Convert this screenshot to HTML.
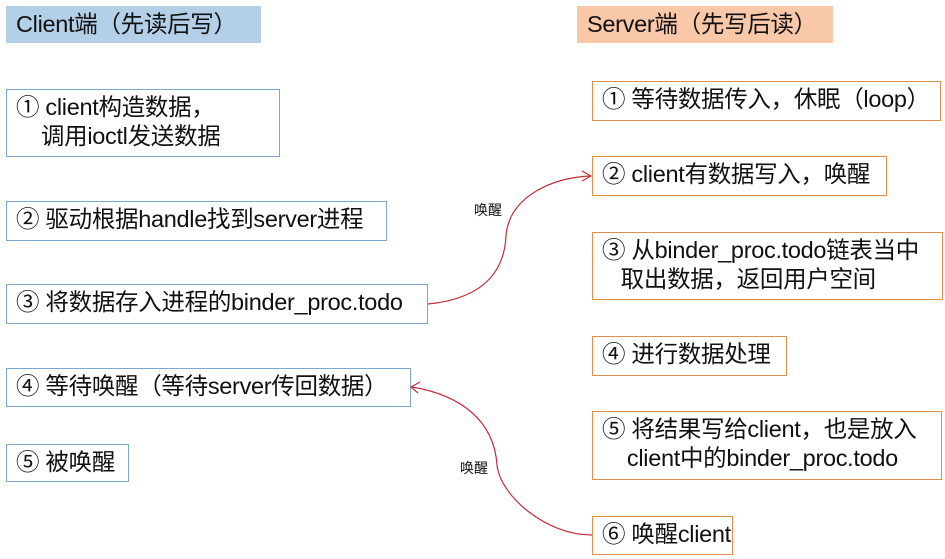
<!DOCTYPE html>
<html><head><meta charset="utf-8"><style>
body{margin:0;width:945px;height:559px;background:#fff;position:relative;overflow:hidden;font-family:"Liberation Sans","Noto Sans CJK SC",sans-serif;color:#111}
.b{position:absolute;box-sizing:border-box;font-size:23.5px;line-height:29px;padding:3px 0 0 9px;white-space:nowrap;letter-spacing:-0.3px}
.l{border:1.5px solid #7fa6cc}
.r{border:1.5px solid #e0904a}
.h{position:absolute;font-size:23.5px;line-height:37px;padding-left:10px;box-sizing:border-box;white-space:nowrap;letter-spacing:-0.3px}
.s{position:absolute;font-size:14px}
</style></head><body>
<div class="h" style="left:6px;top:6px;width:255px;height:37px;background:#b4cfe8">Client端（先读后写）</div>
<div class="h" style="left:577px;top:6px;width:256px;height:37px;background:#f8c8a8">Server端（先写后读）</div>

<div class="b l" style="left:6px;top:89px;width:274px;height:68px">① client构造数据，<br>&nbsp;&nbsp;&nbsp;&nbsp;调用ioctl发送数据</div>
<div class="b l" style="left:6px;top:201px;width:381px;height:40px">② 驱动根据handle找到server进程</div>
<div class="b l" style="left:6px;top:284px;width:422px;height:40px">③ 将数据存入进程的binder_proc.todo</div>
<div class="b l" style="left:6px;top:368px;width:405px;height:39px">④ 等待唤醒（等待server传回数据）</div>
<div class="b l" style="left:6px;top:444px;width:123px;height:38px">⑤ 被唤醒</div>

<div class="b r" style="left:592px;top:81px;width:349px;height:40px">① 等待数据传入，休眠（loop）</div>
<div class="b r" style="left:592px;top:156px;width:295px;height:40px">② client有数据写入，唤醒</div>
<div class="b r" style="left:592px;top:232px;width:351px;height:68px">③ 从binder_proc.todo链表当中<br>&nbsp;&nbsp;&nbsp;取出数据，返回用户空间</div>
<div class="b r" style="left:592px;top:336px;width:195px;height:40px">④ 进行数据处理</div>
<div class="b r" style="left:592px;top:411px;width:350px;height:69px">⑤ 将结果写给client，也是放入<br>&nbsp;&nbsp;&nbsp;&nbsp;client中的binder_proc.todo</div>
<div class="b r" style="left:592px;top:516px;width:141px;height:39px">⑥ 唤醒client</div>

<div class="s" style="left:474px;top:200px">唤醒</div>
<div class="s" style="left:460px;top:458px">唤醒</div>

<svg width="945" height="559" style="position:absolute;left:0;top:0" fill="none" stroke="#c0303a" stroke-width="1.2">
<path d="M428,304 C490,298 505,265 506,235 C510,195 555,177 591,176"/>
<path d="M582,171 L591,176 L582,181"/>
<path d="M592,535 C545,535 500,495 497,465 C494,420 460,395 412,387"/>
<path d="M420,382 L411,387 L418,393"/>
</svg>
</body></html>
